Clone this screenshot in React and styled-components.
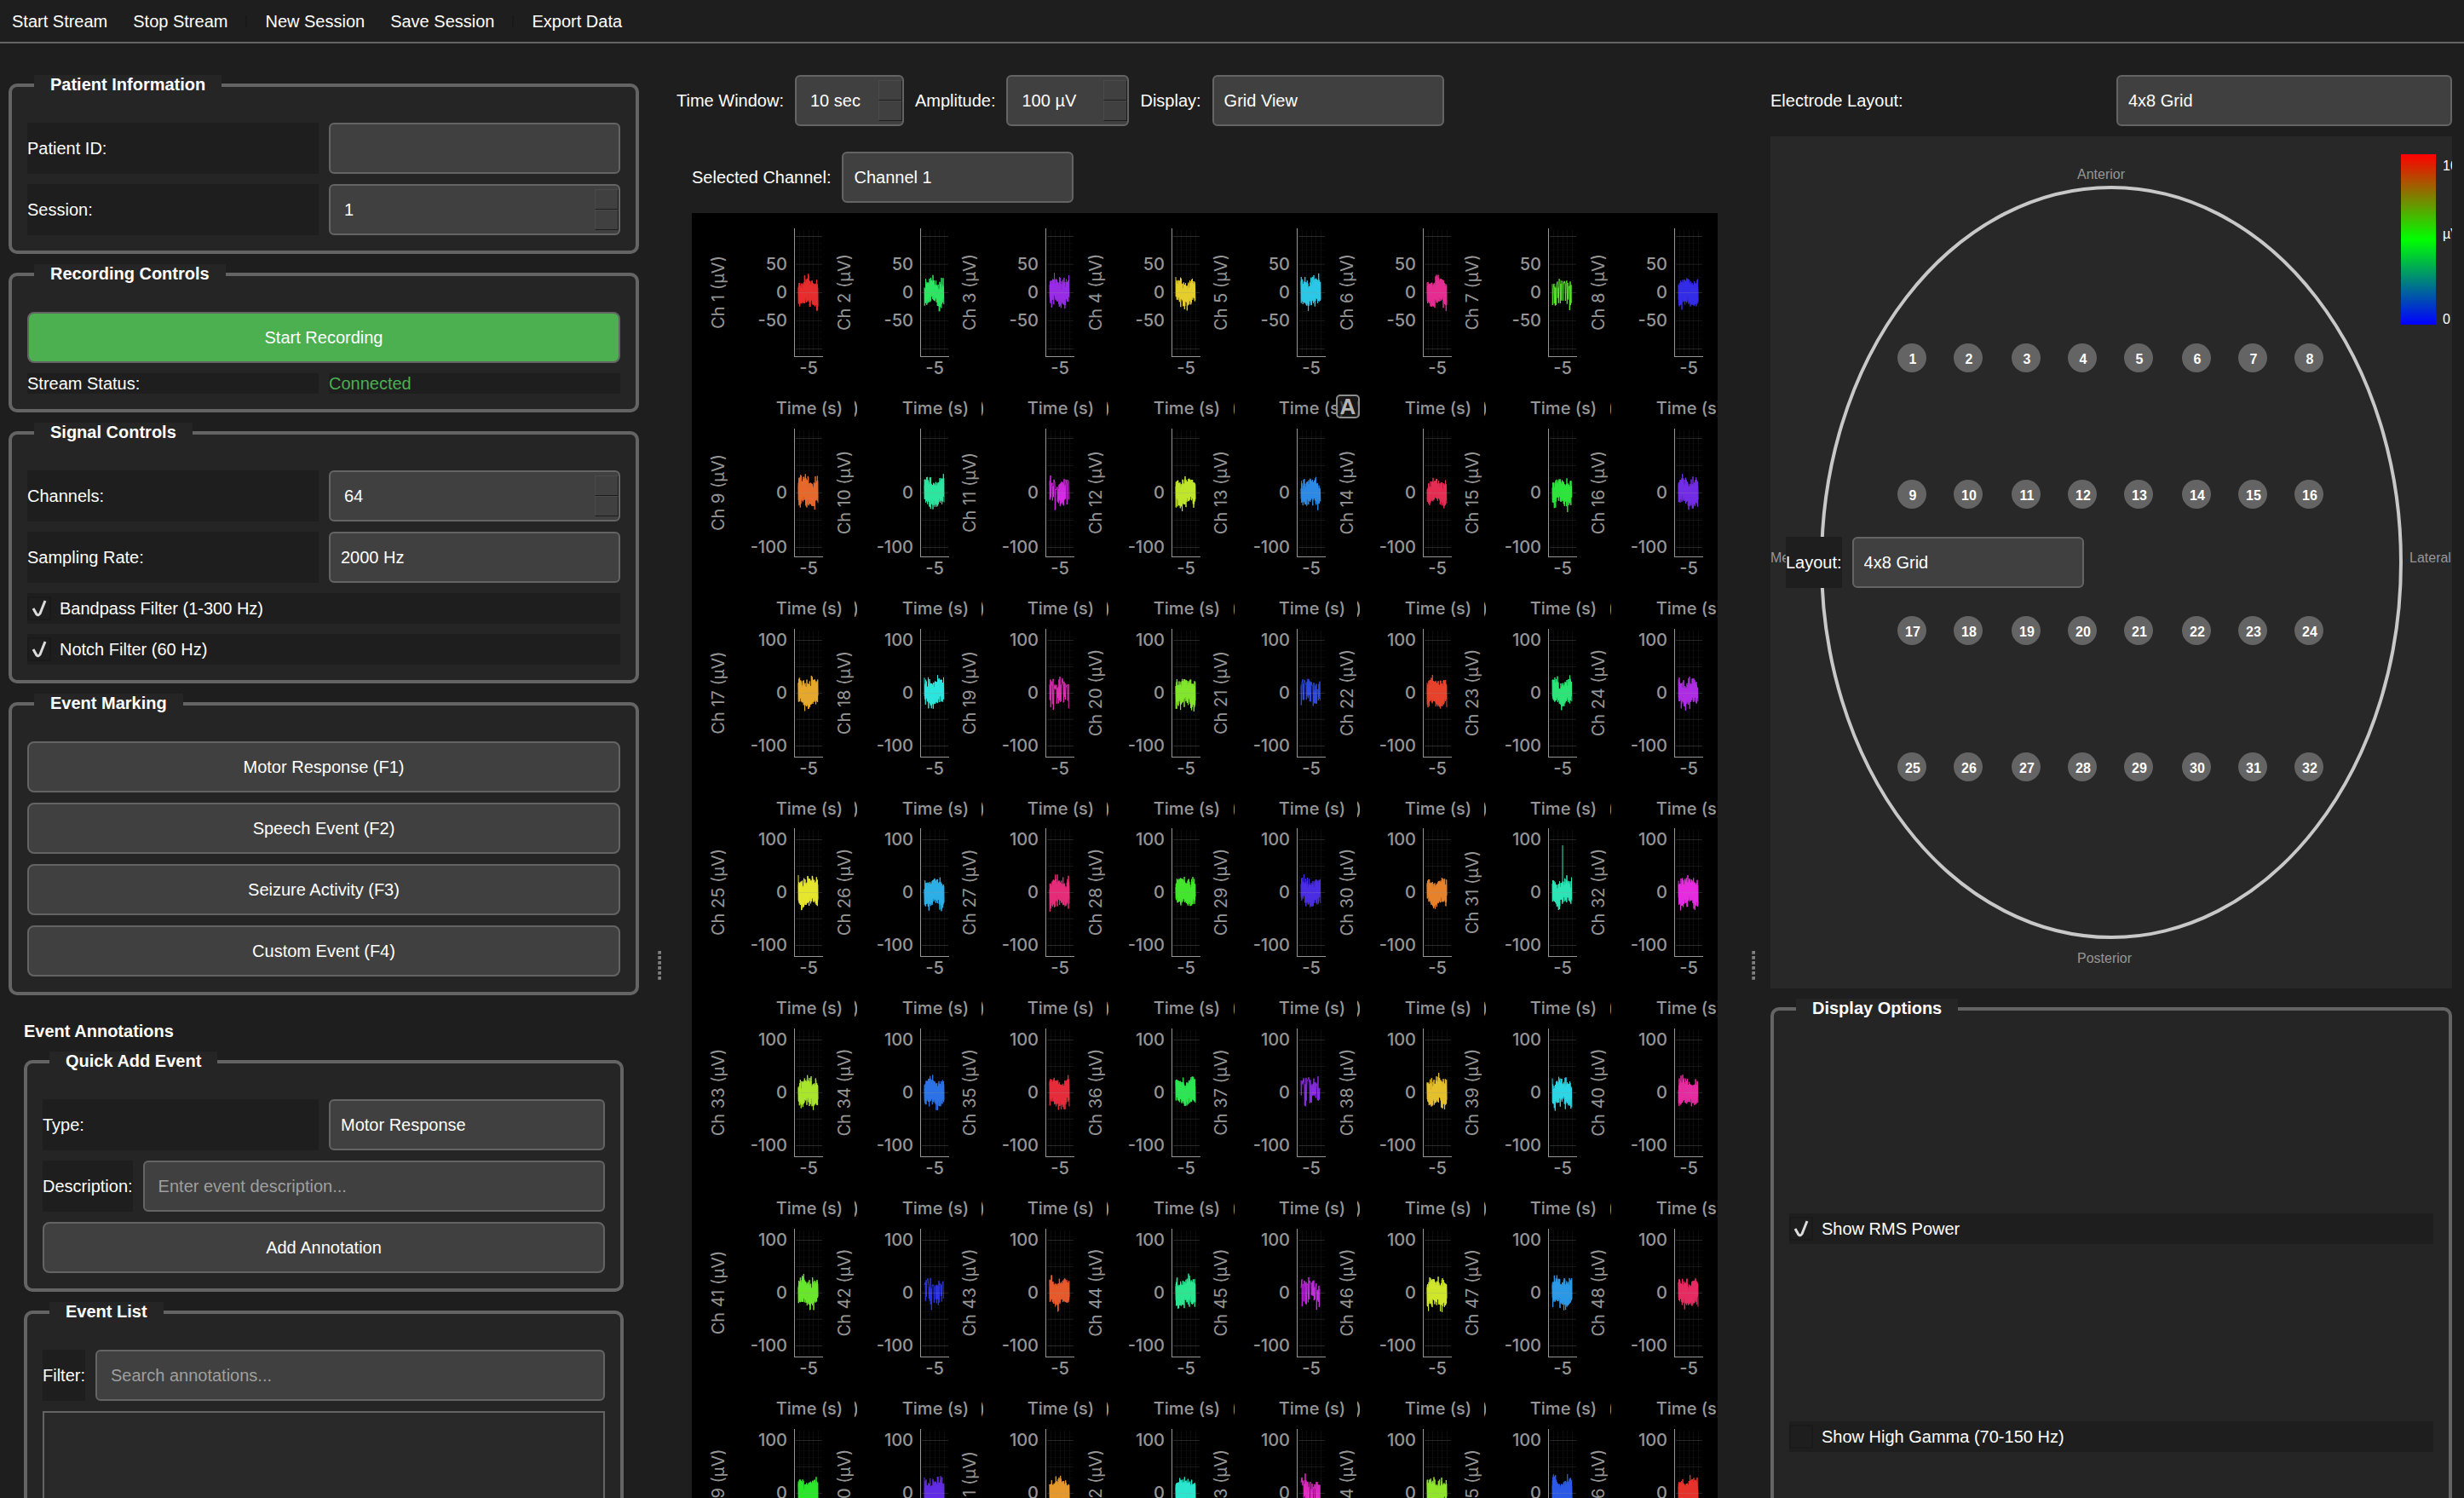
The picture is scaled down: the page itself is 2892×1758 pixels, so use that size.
import React, { useState } from "react";
import styled, { createGlobalStyle } from "styled-components";

const color = {
  page: "#1e1e1e",
  panel: "#252525",
  control: "#404040",
  line: "#646464",
  text: "#ffffff",
  muted: "#969696",
  green: "#4caf50",
};

const GlobalStyle = createGlobalStyle`
  *, *::before, *::after { box-sizing: border-box; }
  body {
    margin: 0;
    background: ${color.page};
    color: ${color.text};
    font: 20px/24px "Liberation Sans", Arial, sans-serif;
  }
  button, input, select { font: inherit; color: inherit; }
`;

const Window = styled.div`
  display: flex;
  flex-direction: column;
  height: 100vh;
  overflow: hidden;
`;

const Toolbar = styled.nav`
  display: flex;
  flex: none;
  align-items: center;
  gap: 2px;
  height: 51px;
  border-bottom: 2px solid ${color.line};
`;

const ToolButton = styled.button`
  padding: 0 14px;
  height: 40px;
  border: 0;
  background: transparent;
  white-space: nowrap;
`;

const ToolSeparator = styled.span`
  width: 2px;
  height: 14px;
  margin: 0 5px;
  background: #191919;
`;

const Workspace = styled.main`
  display: grid;
  flex: 1;
  min-height: 0;
  grid-template-columns: minmax(0, 760fr) 28px minmax(0, 1256fr) 28px minmax(0, 820fr);
`;

const Column = styled.section`
  display: flex;
  flex-direction: column;
  gap: 12px;
  min-height: 0;
  overflow: hidden;
  padding: 37px ${(p) => p.$right}px 0 ${(p) => p.$left}px;
  > * { flex: none; }
`;

const Handle = styled.div`
  display: flex;
  flex-direction: column;
  align-items: center;
  justify-content: flex-start;
  gap: 2px;
  padding-top: 1065px;
  cursor: col-resize;
`;

const HandleDot = styled.span`
  width: 4px;
  height: 4px;
  background: #808080;
  border-bottom: 1px solid #646464;
  border-left: 1px solid #646464;
`;

const Group = styled.fieldset`
  margin: 0;
  min-width: 0;
  padding: 32px 18px 18px;
  border: 4px solid ${color.line};
  border-radius: 10px;
  background: ${color.panel};
`;

const GroupTitle = styled.legend`
  margin-left: 8px;
  padding: 0 19px 1px;
  background: ${color.panel};
  font-weight: bold;
  line-height: 23px;
`;

const Stack = styled.div`
  display: flex;
  flex-direction: column;
  gap: ${(p) => p.$gap || 12}px;
  padding-top: ${(p) => p.$top || 0}px;
`;

const Halves = styled.div`
  display: grid;
  grid-template-columns: minmax(0, 1fr) minmax(0, 1fr);
  gap: 12px;
`;

const Inline = styled.div`
  display: flex;
  gap: 12px;
`;

const ControlRow = styled.div`
  display: flex;
  gap: 13px;
  padding-top: ${(p) => (p.$inset ? 18 : 0)}px;
  padding-left: ${(p) => (p.$inset ? 18 : 0)}px;
`;

const Label = styled.label`
  display: flex;
  align-items: center;
  flex: none;
  background: ${color.page};
  white-space: nowrap;
`;

const Status = styled.output`
  background: ${color.page};
  color: ${color.green};
`;

const TextField = styled.input`
  flex: 1;
  width: 100%;
  min-width: 0;
  height: 60px;
  padding: 0 16px;
  border: 2px solid ${color.line};
  border-radius: 6px;
  background: ${color.control};
  outline: 0;
  &::placeholder { color: #9f9f9f; opacity: 1; }
`;

const Select = styled.select`
  appearance: none;
  width: ${(p) => (p.$width ? p.$width + "px" : "100%")};
  height: 60px;
  padding: 0 12px;
  border: 2px solid ${color.line};
  border-radius: 6px;
  background: ${color.control};
  outline: 0;
`;

const SpinFrame = styled.div`
  display: flex;
  align-items: center;
  width: ${(p) => (p.$width ? p.$width + "px" : "100%")};
  height: 60px;
  border: 2px solid ${color.line};
  border-radius: 6px;
  background: ${color.control};
`;

const SpinInput = styled.input`
  flex: 1;
  width: 0;
  min-width: 0;
  padding: 0 0 0 16px;
  border: 0;
  outline: 0;
  background: transparent;
`;

const SpinButtons = styled.div`
  display: grid;
  grid-template-rows: 24px 24px;
  width: 28px;
`;

const SpinButton = styled.button`
  padding: 0;
  border: 1px solid #4a4a4a;
  border-right: 1px solid #1c1c1c;
  border-bottom: 1px solid #1c1c1c;
  background: ${color.control};
`;

const Button = styled.button`
  width: 100%;
  height: 60px;
  border: 2px solid ${color.line};
  border-radius: 8px;
  background: ${(p) => (p.$primary ? color.green : color.control)};
`;

const CheckLabel = styled.label`
  display: flex;
  align-items: center;
  gap: 10px;
  height: 36px;
  background: ${color.page};
`;

const CheckMark = styled.span`
  display: grid;
  place-items: center;
  width: 28px;
  height: 28px;
  border: 2px solid #1a1a1a;
  svg { visibility: hidden; }
  input:checked + & svg { visibility: visible; }
`;

const CheckInput = styled.input`
  position: absolute;
  opacity: 0;
`;

const Annotations = styled.div`
  display: flex;
  flex-direction: column;
  gap: 12px;
  padding: 18px;
`;

const Heading = styled.h2`
  margin: 0;
  font: inherit;
  font-weight: bold;
`;

const EventItems = styled.div`
  height: 400px;
  border: 2px solid ${color.line};
  background: #292929;
`;

const PlotPanel = styled.div`
  position: relative;
  display: grid;
  grid-template-columns: repeat(8, minmax(0, 1fr));
  grid-template-rows: repeat(8, minmax(0, 1fr));
  height: 1878px;
  margin: 0 18px;
  padding: 0 6px 0 18px;
  overflow: hidden;
  background: #000000;
`;

const Plot = styled.svg`
  display: block;
  width: 148px;
  height: 234px;
  overflow: visible;
  fill: ${color.muted};
  font: 500 20px Inter, sans-serif;
`;

const AutoBadge = styled.button`
  position: absolute;
  left: 756px;
  top: 213px;
  display: grid;
  place-items: center;
  width: 28px;
  height: 28px;
  padding: 0;
  border: 2px solid #8c8c8c;
  border-radius: 5px;
  background: rgba(30, 30, 30, 0.7);
  color: #b4b4b4;
  font: bold 26px/24px "Liberation Sans", Arial, sans-serif;
`;

const BrainMap = styled.div`
  position: relative;
  display: flex;
  align-items: center;
  height: 1000px;
  padding-left: 18px;
  overflow: hidden;
  background: #282828;
`;

const BrainDrawing = styled.svg`
  position: absolute;
  inset: 0;
  width: 100%;
  height: 100%;
  font: 16px "Liberation Sans", Arial, sans-serif;
`;

const Raised = styled.div`
  position: relative;
  display: flex;
  gap: 12px;
`;

const DisplayGroup = styled(Group)`
  height: 900px;
`;

function Combo({ id, value, width }) {
  return (
    <Select id={id} $width={width} defaultValue={value}>
      <option>{value}</option>
    </Select>
  );
}

function Spin({ id, value, suffix = "", width, step = 1 }) {
  const [current, setCurrent] = useState(value);
  return (
    <SpinFrame $width={width}>
      <SpinInput id={id} role="spinbutton" aria-valuenow={current} value={current + suffix} readOnly />
      <SpinButtons>
        <SpinButton type="button" aria-label="Increase" onClick={() => setCurrent(current + step)} />
        <SpinButton type="button" aria-label="Decrease" onClick={() => setCurrent(current - step)} />
      </SpinButtons>
    </SpinFrame>
  );
}

function Check({ label, checked }) {
  return (
    <CheckLabel>
      <CheckInput type="checkbox" defaultChecked={checked} />
      <CheckMark>
        <svg width="18" height="22" viewBox="0 0 18 22" fill="none" stroke="#dcdcdc" strokeWidth="3">
          <path d="M2 11 L6 18 Q8 20 10 17 L16 2" />
        </svg>
      </CheckMark>
      {label}
    </CheckLabel>
  );
}

function SplitHandle() {
  return (
    <Handle>
      {[0, 1, 2, 3, 4, 5].map((n) => (
        <HandleDot key={n} />
      ))}
    </Handle>
  );
}

function randomSource(seed) {
  let state = seed * 7919 + 17;
  return () => {
    state = (state * 1664525 + 1013904223) % 4294967296;
    return state / 4294967296;
  };
}

const SPARSE = [7, 11, 19, 21, 37, 42, 45, 53];
const MEDIUM = [2, 3, 4, 13, 14, 15, 18, 23, 24, 29, 31, 39, 40];
const AXIS_X = 102;
const CENTER = 93;
const UNIT_TAILS = [3, 2, 2, 1, 3, 2, 1, 0];

function wavePath(channel) {
  const random = randomSource(channel);
  const passes = SPARSE.includes(channel) ? 1 : MEDIUM.includes(channel) ? 2 : 3;
  const points = [];
  for (let column = 0; column < 23; column++) {
    const drift = Math.sin(column / 3 + channel) * 3;
    for (let pass = 0; pass < passes; pass++) {
      const high = 5 + random() * 9 + (random() > 0.85 ? 6 : 0);
      const low = 5 + random() * 9 + (random() > 0.85 ? 6 : 0);
      const x = 107 + column + (pass * 1) / passes;
      points.push(x.toFixed(1) + " " + (CENTER + drift - high).toFixed(1));
      if (passes > 1 || random() > 0.3) {
        points.push((x + 0.3).toFixed(1) + " " + (CENTER + drift + low).toFixed(1));
      }
    }
  }
  return "M" + points.join("L");
}

function ChannelPlot({ channel }) {
  const row = Math.floor((channel - 1) / 8);
  const tail = UNIT_TAILS[(channel - 1) % 8];
  const step = row === 0 ? 33 : row === 1 ? 32 : 31;
  const ticks =
    row === 0
      ? [["50", -1], ["0", 0], ["-50", 1]]
      : row === 1
        ? [["0", 0], ["-100", 2]]
        : [["100", -2], ["0", 0], ["-100", 2]];
  const tint = `hsl(${((channel - 1) * 137.5) % 360} 79% 54%)`;
  return (
    <Plot aria-label={"Channel " + channel}>
      <g shapeRendering="crispEdges">
        {[0, 1, 2, 3, 4, 5, 6, 7, 8, 9, 10, 11, 12, 13, 14, 15, 16].map((n) => (
          <rect key={n} x={AXIS_X + 2} y={CENTER - 66 + n * 8} width="31" height="1" fill="#080808" />
        ))}
        {[108, 113, 119, 124, 130].map((x) => (
          <rect key={x} x={x} y="20" width="1" height="147" fill="#0c0c0c" />
        ))}
      </g>
      <path d={wavePath(channel)} fill="none" stroke={tint} strokeWidth="1" strokeLinejoin="bevel" />
      {channel === 31 && <path d="M119 93V38" stroke={tint} strokeWidth="1" />}
      <g shapeRendering="crispEdges">
        {[-2, -1, 0, 1, 2].map((n) => (
          <rect
            key={n}
            x={AXIS_X + 2}
            y={CENTER + n * step}
            width="31"
            height="1"
            fill="#969696"
            fillOpacity={n % 2 ? 0.14 : 0.24}
          />
        ))}
        <rect x={AXIS_X} y="18" width="1" height="151" />
        <rect x={AXIS_X} y="168" width="34" height="1" />
      </g>
      {ticks.map(([label, n]) => (
        <text key={label} x="94" y={CENTER + 7 + n * step} textAnchor="end">
          {label}
        </text>
      ))}
      <text x="119" y="189" textAnchor="middle">-5</text>
      <text x="120" y="236" textAnchor="middle">Time (s)</text>
      {tail > 0 && (
        <svg x={176 - tail} y="214" width={tail} height="32" overflow="hidden">
          <text x={tail + 2} y="22" textAnchor="end">)</text>
        </svg>
      )}
      <text transform="translate(20 93) rotate(-90)" textAnchor="middle" fontWeight="400">
        {"Ch " + channel + " (µV)"}
      </text>
    </Plot>
  );
}

const CHANNELS = Array.from({ length: 64 }, (_, n) => n + 1);
const ELECTRODE_X = [166, 232, 300, 366, 432, 500, 566, 632];
const ELECTRODE_Y = [260, 420, 580, 740];

function Electrodes() {
  return ELECTRODE_Y.flatMap((y, row) =>
    ELECTRODE_X.map((x, col) => (
      <g key={x + "-" + y}>
        <circle cx={x} cy={y} r="17" fill={color.line} />
        <text x={x + 1} y={y + 7} textAnchor="middle" fontWeight="bold" fill={color.text}>
          {row * 8 + col + 1}
        </text>
      </g>
    ))
  );
}

export default function App() {
  return (
    <Window>
      <GlobalStyle />
      <Toolbar>
        <ToolButton>Start Stream</ToolButton>
        <ToolButton>Stop Stream</ToolButton>
        <ToolSeparator />
        <ToolButton>New Session</ToolButton>
        <ToolButton>Save Session</ToolButton>
        <ToolSeparator />
        <ToolButton>Export Data</ToolButton>
      </Toolbar>

      <Workspace>
        <Column $left={10} $right={10}>
          <Group>
            <GroupTitle>Patient Information</GroupTitle>
            <Stack>
              <Halves>
                <Label htmlFor="patient-id">Patient ID:</Label>
                <TextField id="patient-id" />
              </Halves>
              <Halves>
                <Label htmlFor="session">Session:</Label>
                <Spin id="session" value={1} />
              </Halves>
            </Stack>
          </Group>

          <Group>
            <GroupTitle>Recording Controls</GroupTitle>
            <Stack>
              <Button $primary>Start Recording</Button>
              <Halves>
                <Label htmlFor="stream-status">Stream Status:</Label>
                <Status id="stream-status">Connected</Status>
              </Halves>
            </Stack>
          </Group>

          <Group>
            <GroupTitle>Signal Controls</GroupTitle>
            <Stack>
              <Halves>
                <Label htmlFor="channels">Channels:</Label>
                <Spin id="channels" value={64} />
              </Halves>
              <Halves>
                <Label htmlFor="sampling-rate">Sampling Rate:</Label>
                <Combo id="sampling-rate" value="2000 Hz" />
              </Halves>
              <Check label="Bandpass Filter (1-300 Hz)" checked />
              <Check label="Notch Filter (60 Hz)" checked />
            </Stack>
          </Group>

          <Group>
            <GroupTitle>Event Marking</GroupTitle>
            <Stack>
              <Button>Motor Response (F1)</Button>
              <Button>Speech Event (F2)</Button>
              <Button>Seizure Activity (F3)</Button>
              <Button>Custom Event (F4)</Button>
            </Stack>
          </Group>

          <Annotations>
            <Heading>Event Annotations</Heading>
            <Group>
              <GroupTitle>Quick Add Event</GroupTitle>
              <Stack>
                <Halves>
                  <Label htmlFor="event-type">Type:</Label>
                  <Combo id="event-type" value="Motor Response" />
                </Halves>
                <Inline>
                  <Label htmlFor="description">Description:</Label>
                  <TextField id="description" placeholder="Enter event description..." />
                </Inline>
                <Button>Add Annotation</Button>
              </Stack>
            </Group>
            <Group>
              <GroupTitle>Event List</GroupTitle>
              <Stack>
                <Inline>
                  <Label htmlFor="filter">Filter:</Label>
                  <TextField id="filter" placeholder="Search annotations..." />
                </Inline>
                <EventItems />
              </Stack>
            </Group>
          </Annotations>
        </Column>

        <SplitHandle />

        <Column $left={6} $right={10}>
          <ControlRow>
            <Label htmlFor="time-window">Time Window:</Label>
            <Spin id="time-window" value={10} suffix=" sec" width={128} />
            <Label htmlFor="amplitude">Amplitude:</Label>
            <Spin id="amplitude" value={100} suffix=" µV" width={144} step={10} />
            <Label htmlFor="display">Display:</Label>
            <Combo id="display" value="Grid View" width={272} />
          </ControlRow>
          <ControlRow $inset>
            <Label htmlFor="selected-channel">Selected Channel:</Label>
            <Combo id="selected-channel" value="Channel 1" width={272} />
          </ControlRow>
          <PlotPanel>
            {CHANNELS.map((channel) => (
              <ChannelPlot key={channel} channel={channel} />
            ))}
            <AutoBadge aria-label="Auto range">A</AutoBadge>
          </PlotPanel>
        </Column>

        <SplitHandle />

        <Column $left={6} $right={14}>
          <Halves>
            <Label htmlFor="electrode-layout">Electrode Layout:</Label>
            <Combo id="electrode-layout" value="4x8 Grid" />
          </Halves>
          <BrainMap>
            <BrainDrawing viewBox="0 0 800 1000">
              <defs>
                <linearGradient id="scale" x1="0" y1="0" x2="0" y2="1">
                  <stop offset="0" stopColor="#ff0000" />
                  <stop offset="0.5" stopColor="#00ff00" />
                  <stop offset="1" stopColor="#0000ff" />
                </linearGradient>
              </defs>
              <ellipse cx="400" cy="500" rx="340" ry="440" fill="none" stroke="#c8c8c8" strokeWidth="4" />
              <g fill={color.muted}>
                <text x="360" y="50">Anterior</text>
                <text x="360" y="970">Posterior</text>
                <text x="0" y="500">Medial</text>
                <text x="750" y="500">Lateral</text>
              </g>
              <Electrodes />
              <rect x="740" y="21" width="41" height="200" fill="url(#scale)" />
              <g fill={color.text}>
                <text x="789" y="40">100</text>
                <text x="789" y="120">µV</text>
                <text x="789" y="220">0</text>
              </g>
            </BrainDrawing>
            <Raised>
              <Label htmlFor="map-layout">Layout:</Label>
              <Combo id="map-layout" value="4x8 Grid" width={272} />
            </Raised>
          </BrainMap>
          <DisplayGroup>
            <GroupTitle>Display Options</GroupTitle>
            <Stack $gap={208} $top={196}>
              <Check label="Show RMS Power" checked />
              <Check label="Show High Gamma (70-150 Hz)" />
            </Stack>
          </DisplayGroup>
        </Column>
      </Workspace>
    </Window>
  );
}
